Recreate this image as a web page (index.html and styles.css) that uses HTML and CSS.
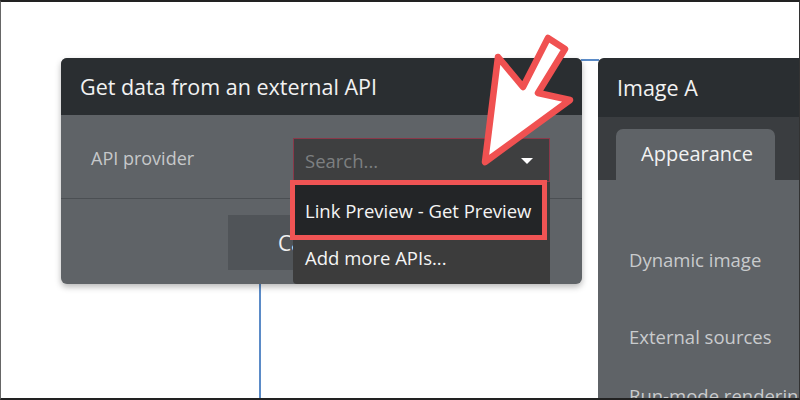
FILE: index.html
```html
<!doctype html>
<html>
	<head>
		<title>Get data from an external API</title>
		<link rel="stylesheet" href="styles.css">
	</head>
	<body>
		<div class="frame">
			<div class="canvas">
				<section class="panel api">
					<div class="panelHead">Get data from an external API</div>
					<div class="row">
						<label class="label">API provider</label>
						<div class="select">
							<span class="placeholder">Search...</span>
							<span class="caret"></span>
							<ul class="menu">
								<li class="item active">Link Preview - Get Preview</li>
								<li class="item">Add more APIs...</li>
							</ul>
						</div>
					</div>
					<div class="footer">
						<button class="cancel">Cancel</button>
					</div>
				</section>

				<section class="panel props">
					<div class="panelHead">Image A</div>
					<div class="tabStrip">
						<div class="tab">Appearance</div>
					</div>
					<div class="propBody">
						<div class="prop">Dynamic image</div>
						<div class="prop">External sources</div>
						<div class="prop group">Run-mode rendering</div>
					</div>
				</section>
			</div>

			<div class="wire vertical"></div>
			<div class="wire horizontal"></div>

			<svg class="arrow" width="800" height="400" viewBox="0 0 800 400">
				<polygon points="485,162 498,57 523,87 548,38 565,49 538,93 570,100" />
			</svg>
		</div>
	</body>
</html>
```

FILE: styles.css
```css
* { box-sizing: border-box; }

html, body {
	margin: 0;
	padding: 0;
	background: #fff;
	font-family: "Open Sans", "Liberation Sans", sans-serif;
}

.frame {
	position: relative;
	width: 800px;
	height: 400px;
	overflow: hidden;
	border-top: 2px solid #222;
	border-bottom: 2px solid #222;
	border-left: 1px solid #666;
	border-right: 1px solid #333;
	background: #fff;
}

.canvas {
	display: flex;
	align-items: flex-start;
	padding: 56px 0 0 60px;
	height: 100%;
}

.panel {
	border-radius: 6px;
}

.panelHead {
	background-color: #2a2e31;
	color: #f2f2f2;
	font-size: 21.5px;
	padding-left: 19px;
	display: flex;
	align-items: center;
	border-radius: 6px 6px 0 0;
}

/* left panel */

.api {
	flex: none;
	width: 521px;
	background-color: #5f6367;
	box-shadow: 0 3px 6px rgba(0, 0, 0, 0.28);
	position: relative;
	z-index: 2;
}

.api .panelHead { height: 57px; }

.row {
	display: flex;
	height: 84px;
	border-bottom: 1px solid #4b4f53;
}

.label {
	width: 232px;
	padding-left: 30px;
	padding-top: 31px;
	color: #c6c8ca;
	font-size: 18px;
}

.select {
	position: relative;
	width: 257px;
	height: 44px;
	margin-top: 23px;
	background-color: #3e3f40;
	border: 1px solid #8a3849;
	display: flex;
	align-items: center;
	padding-left: 11px;
}

.placeholder {
	color: #7d7f81;
	font-size: 18.5px;
}

.caret {
	position: absolute;
	right: 16px;
	top: 19px;
	border-left: 6px solid transparent;
	border-right: 6px solid transparent;
	border-top: 6px solid #fff;
}

.menu {
	position: absolute;
	top: 43px;
	left: -1px;
	width: 257px;
	height: 102px;
	margin: 0;
	padding: 0;
	list-style: none;
	background-color: #3c3c3c;
	z-index: 3;
	border-radius: 0 0 0 4px;
}

.item {
	color: #f4f4f4;
	font-size: 18.5px;
	padding-left: 12px;
	height: 34px;
	display: flex;
	align-items: center;
}

.item.active {
	height: 60px;
	margin: -2px 3px 0 -3px;
	padding-left: 10px;
	background-color: #232527;
	border: 5px solid #f05454;
}

.footer {
	height: 85px;
	padding: 16px 0 0 167px;
}

.cancel {
	border: 0 none;
	background-color: #505458;
	color: #f0f0f0;
	font-family: inherit;
	font-size: 21px;
	width: 110px;
	height: 55px;
	padding: 0 0 0 50px;
	text-align: left;
}

/* right panel */

.props {
	flex: 1;
	min-width: 0;
	overflow: hidden;
	margin-left: 16px;
	height: 400px;
	background-color: #5f6367;
	border-radius: 6px 0 0 0;
}

.props .panelHead {
	height: 59px;
	border-radius: 6px 0 0 0;
}

.tabStrip {
	background-color: #3a3d40;
	height: 63px;
	padding: 12px 0 0 18px;
}

.tab {
	width: 159px;
	height: 51px;
	background-color: #5f6367;
	border-radius: 7px 7px 0 0;
	color: #f2f2f2;
	font-size: 20px;
	display: flex;
	align-items: center;
	justify-content: center;
	padding: 0 0 2px 3px;
}

.propBody { padding: 68px 0 0 31px; }

.prop {
	line-height: 24px;
	color: #c9cbcd;
	font-size: 18.5px;
	white-space: nowrap;
}

.prop + .prop { margin-top: 53px; }
.prop.group { margin-top: 35px; }

/* connector lines */

.wire {
	position: absolute;
	background-color: #5b8bc7;
}

.wire.vertical {
	left: 258px;
	top: 280px;
	bottom: 0;
	width: 2px;
}

.wire.horizontal {
	left: 580px;
	top: 57px;
	width: 18px;
	height: 2px;
}

.arrow {
	position: absolute;
	left: -1px;
	top: -2px;
	z-index: 5;
}

.arrow polygon {
	fill: #fff;
	stroke: #f05151;
	stroke-width: 6.5;
	stroke-linejoin: round;
}
```
